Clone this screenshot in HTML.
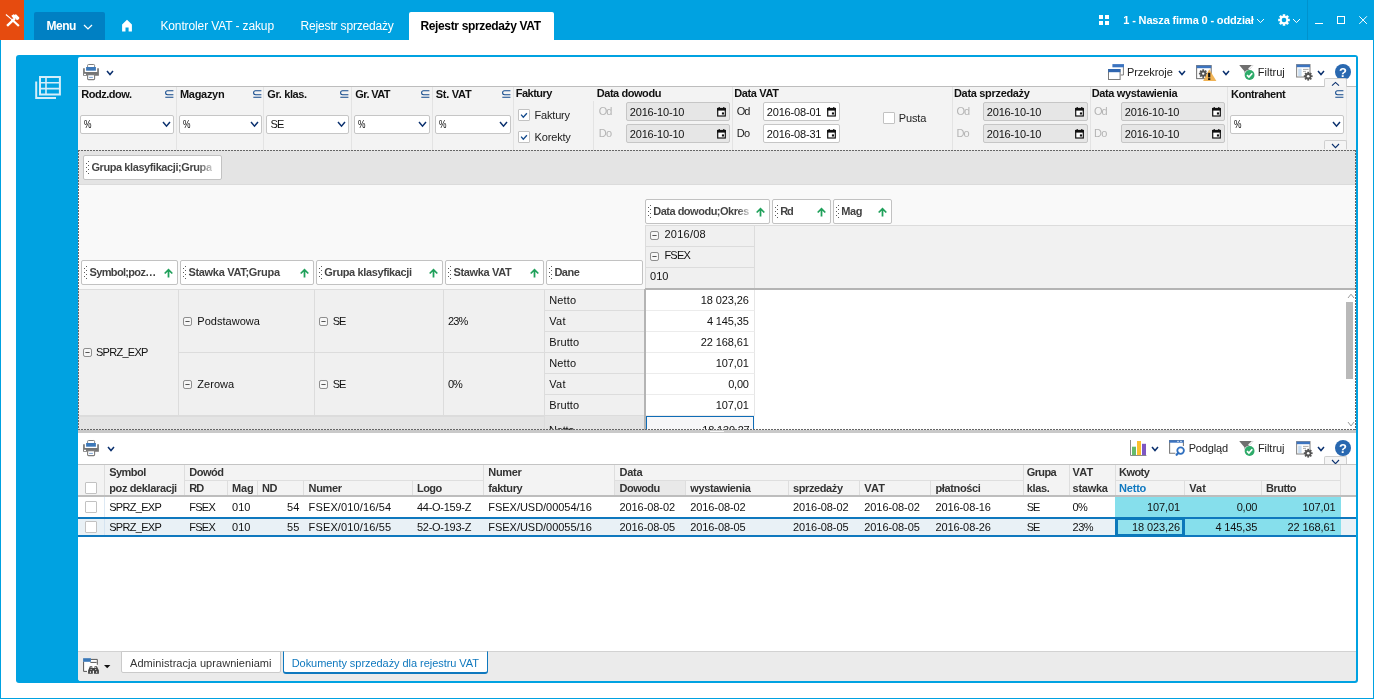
<!DOCTYPE html>
<html lang="pl"><head><meta charset="utf-8"><title>Rejestr sprzedaży VAT</title><style>
html,body{margin:0;padding:0;}
body{width:1374px;height:699px;position:relative;overflow:hidden;background:#fff;font-family:"Liberation Sans", sans-serif;}
#root{position:absolute;left:0;top:0;width:1374px;height:699px;will-change:transform;}
.a{position:absolute;box-sizing:border-box;}
.t{white-space:nowrap;}
svg{display:block;overflow:visible;}
</style></head><body>
<div id="root">
<div class="a" style="left:0px;top:0px;width:1374px;height:40px;background:#00a2e1;"></div>
<div class="a" style="left:0px;top:40px;width:1px;height:659px;background:#00a2e1;"></div>
<div class="a" style="left:1373px;top:40px;width:1px;height:659px;background:#00a2e1;"></div>
<div class="a" style="left:0px;top:698px;width:1374px;height:1px;background:#00a2e1;"></div>
<div class="a" style="left:0px;top:0px;width:24px;height:40px;background:#e64b0f;"></div>
<svg class="a" style="left:5px;top:13px;" width="15" height="15" viewBox="0 0 15 15"><g stroke="#fff" fill="none"><path d="M0.9 1.5 L7 6.6" stroke-width="1.1"/><path d="M6.6 6.3 L13.9 13" stroke-width="2.2"/><path d="M2.1 12.8 L9.8 5.6" stroke-width="2.4"/></g><path d="M6.3 2.7 L8.6 1.3 L10 2 L10.8 1.1 L14.3 4.6 L14.1 6 L12 7.3 L10.4 5.5 L9.4 6.2 L7.4 4.2 Z" fill="#fff"/></svg>
<div class="a" style="left:34px;top:12px;width:71px;height:28px;background:#0080c3;border-radius:2px 2px 0 0;"></div>
<span id="t0" class="a t" style="top:20px;font-size:12px;line-height:12px;color:#fff;font-weight:700;left:46.4px;letter-spacing:-0.436px;">Menu</span>
<svg class="a" style="left:83.3px;top:23.6px;" width="10" height="5.9" viewBox="0 0 10 5.9"><path d="M1 1 L5.0 4.9 L9 1" fill="none" stroke="#fff" stroke-width="1.3" stroke-linecap="butt" stroke-linejoin="miter"/></svg>
<svg class="a" style="left:121px;top:19px;" width="12" height="13" viewBox="0 0 12 13"><path d="M6 0.7 L10.9 5.6 V12.6 H7.6 V8.6 H4.5 V12.6 H1.1 V5.6 Z" fill="#fff"/></svg>
<span id="t1" class="a t" style="top:20px;font-size:12px;line-height:12px;color:#fff;left:160.4px;letter-spacing:-0.117px;">Kontroler VAT - zakup</span>
<span id="t2" class="a t" style="top:20px;font-size:12px;line-height:12px;color:#fff;left:300.6px;letter-spacing:-0.173px;">Rejestr sprzedaży</span>
<div class="a" style="left:409px;top:12px;width:145px;height:28px;background:#fff;border-radius:2px 2px 0 0;"></div>
<span id="t3" class="a t" style="top:20px;font-size:12px;line-height:12px;color:#000;font-weight:700;left:420.4px;letter-spacing:-0.343px;">Rejestr sprzedaży VAT</span>
<div class="a" style="left:1099px;top:15px;width:4px;height:4px;background:#fff;"></div>
<div class="a" style="left:1105px;top:15px;width:4px;height:4px;background:#fff;"></div>
<div class="a" style="left:1099px;top:21px;width:4px;height:4px;background:#fff;"></div>
<div class="a" style="left:1105px;top:21px;width:4px;height:4px;background:#fff;"></div>
<span id="t4" class="a t" style="top:15px;font-size:11px;line-height:11px;color:#fff;font-weight:700;left:1123.3px;letter-spacing:-0.151px;">1 - Nasza firma 0 - oddział</span>
<svg class="a" style="left:1256.4px;top:17.8px;" width="9" height="5.6" viewBox="0 0 9 5.6"><path d="M1 1 L4.5 4.6 L8 1" fill="none" stroke="#fff" stroke-width="1" stroke-linecap="butt" stroke-linejoin="miter"/></svg>
<svg class="a" style="left:1278px;top:14px;" width="12" height="12" viewBox="0 0 12 12"><g fill="#fff"><circle cx="6" cy="6" r="4.2"/><rect x="4.7" y="0.2" width="2.6" height="11.6" rx="0.3" transform="rotate(0 6 6)"/><rect x="4.7" y="0.2" width="2.6" height="11.6" rx="0.3" transform="rotate(45 6 6)"/><rect x="4.7" y="0.2" width="2.6" height="11.6" rx="0.3" transform="rotate(90 6 6)"/><rect x="4.7" y="0.2" width="2.6" height="11.6" rx="0.3" transform="rotate(135 6 6)"/></g><circle cx="6" cy="6" r="2.3" fill="#00a2e1"/></svg>
<svg class="a" style="left:1291.7px;top:17.8px;" width="9" height="5.6" viewBox="0 0 9 5.6"><path d="M1 1 L4.5 4.6 L8 1" fill="none" stroke="#fff" stroke-width="1" stroke-linecap="butt" stroke-linejoin="miter"/></svg>
<div class="a" style="left:1307px;top:0px;width:1px;height:40px;background:#0092cd;"></div>
<div class="a" style="left:1315px;top:23px;width:8px;height:1px;background:#fff;"></div>
<div class="a" style="left:1337px;top:16px;width:8px;height:8px;border:1px solid #fff;"></div>
<svg class="a" style="left:1359px;top:16px;" width="8" height="8" viewBox="0 0 8 8"><path d="M0.3 0.3 L7.9 7.9 M7.9 0.3 L0.3 7.9" stroke="#fff" stroke-width="1" fill="none"/></svg>
<div class="a" style="left:16px;top:55px;width:1342px;height:628px;background:#00a2e1;border-radius:3px 3px 3px 3px;"></div>
<div class="a" style="left:78px;top:57px;width:1278px;height:624px;background:#fff;border-radius:2px 0 2px 3px;"></div>
<svg class="a" style="left:35px;top:76px;" width="27" height="24" viewBox="0 0 27 24"><path d="M1.2 5.4 V22 H21" fill="none" stroke="#d4eefa" stroke-width="2"/><rect x="5" y="1" width="19.9" height="17.5" fill="none" stroke="#d4eefa" stroke-width="2"/><path d="M5 6.8 H24.9 M5 12.6 H24.9 M11 1 V18.5" fill="none" stroke="#d4eefa" stroke-width="1.6"/></svg>
<svg class="a" style="left:83px;top:64px;" width="16" height="16" viewBox="0 0 16 16"><rect x="4.6" y="0.5" width="7" height="4" rx="0.9" fill="#fff" stroke="#7d7d7d" stroke-width="1"/><rect x="2.6" y="2.9" width="10.8" height="4.6" fill="#fff"/><rect x="3.1" y="3" width="9.8" height="3.7" fill="#3d78b8"/><path d="M0.1 4.2 H1.8 V8 H14.2 V4.2 H15.9 V11.8 H0.1 Z" fill="#767676"/><rect x="1" y="9.7" width="2" height="1.3" rx="0.3" fill="#fff"/><rect x="4.6" y="10.6" width="7" height="5" rx="0.9" fill="#fff" stroke="#7d7d7d" stroke-width="1.1"/><rect x="6.1" y="12.9" width="3.8" height="0.9" fill="#6f9bd1"/></svg>
<svg class="a" style="left:106.4px;top:69.5px;" width="8" height="5.6" viewBox="0 0 8 5.6"><path d="M1 1 L4.0 4.6 L7 1" fill="none" stroke="#0a306e" stroke-width="1.5" stroke-linecap="butt" stroke-linejoin="miter"/></svg>
<svg class="a" style="left:1108px;top:64px;" width="17" height="17" viewBox="0 0 17 17"><path d="M15.4 3 V11 H12.6" fill="none" stroke="#7a7a7a" stroke-width="1"/><rect x="4.4" y="0.1" width="11.6" height="3.2" fill="#3c74c0"/><rect x="0.5" y="5.5" width="11.6" height="10" fill="#fff" stroke="#7a7a7a" stroke-width="1"/><rect x="0.2" y="5" width="12.2" height="3.2" fill="#2f66b0"/></svg>
<span id="t5" class="a t" style="top:67px;font-size:11px;line-height:11px;color:#222;left:1127px;letter-spacing:-0.085px;">Przekroje</span>
<svg class="a" style="left:1177.5px;top:69.5px;" width="8" height="5.6" viewBox="0 0 8 5.6"><path d="M1 1 L4.0 4.6 L7 1" fill="none" stroke="#0a306e" stroke-width="1.5" stroke-linecap="butt" stroke-linejoin="miter"/></svg>
<svg class="a" style="left:1195.7px;top:64.6px;" width="21" height="17" viewBox="0 0 21 17"><rect x="0.6" y="0.6" width="14.6" height="13" fill="#fff" stroke="#7a7a7a" stroke-width="1.1"/><rect x="0.6" y="0.6" width="14.6" height="2.6" fill="#3c74c0"/><g fill="#555"><circle cx="7.2" cy="8.6" r="3"/><rect x="6.3" y="4.3" width="1.8" height="8.6" transform="rotate(0 7.2 8.6)"/><rect x="6.3" y="4.3" width="1.8" height="8.6" transform="rotate(45 7.2 8.6)"/><rect x="6.3" y="4.3" width="1.8" height="8.6" transform="rotate(90 7.2 8.6)"/><rect x="6.3" y="4.3" width="1.8" height="8.6" transform="rotate(135 7.2 8.6)"/></g><circle cx="7.2" cy="8.6" r="1.2" fill="#fff"/><path d="M13.2 4.2 L20.4 16 H7.2 Z" fill="#f0b355"/><rect x="12.1" y="7.8" width="2.2" height="4.6" fill="#111"/><rect x="12.1" y="13.2" width="2.2" height="1.8" fill="#111"/></svg>
<svg class="a" style="left:1221.5px;top:69.5px;" width="8" height="5.6" viewBox="0 0 8 5.6"><path d="M1 1 L4.0 4.6 L7 1" fill="none" stroke="#0a306e" stroke-width="1.5" stroke-linecap="butt" stroke-linejoin="miter"/></svg>
<svg class="a" style="left:1239px;top:64px;" width="17" height="17" viewBox="0 0 17 17"><path d="M0.2 1 H14.4 L8.6 7.4 L5.6 12.6 L5.4 7.2 Z" fill="#6f6f6f"/><path d="M9.6 5 L13.6 1.2" stroke="#fff" stroke-width="1.2"/><circle cx="10.6" cy="11" r="5.5" fill="#fff"/><circle cx="10.6" cy="11" r="4.9" fill="#2eab6a"/><path d="M8 11.1 L9.9 13 L13.3 9.2" fill="none" stroke="#fff" stroke-width="1.7"/></svg>
<span id="t6" class="a t" style="top:67px;font-size:11px;line-height:11px;color:#222;left:1257.8px;letter-spacing:0.001px;">Filtruj</span>
<svg class="a" style="left:1295.5px;top:64px;" width="17" height="17" viewBox="0 0 17 17"><rect x="0.6" y="0.6" width="13.4" height="12.4" fill="#fff" stroke="#8a8a8a" stroke-width="1.1"/><rect x="0.6" y="0.6" width="13.4" height="2.6" fill="#3c74c0"/><rect x="2.2" y="4.6" width="3.4" height="7.4" fill="#c8dcf0"/><path d="M7 5.4 H12.6 M7 7.4 H10" stroke="#aaa" stroke-width="1"/><g fill="#555"><circle cx="12.2" cy="12.2" r="3.1"/><rect x="11.3" y="7.8" width="1.8" height="8.8" transform="rotate(0 12.2 12.2)"/><rect x="11.3" y="7.8" width="1.8" height="8.8" transform="rotate(45 12.2 12.2)"/><rect x="11.3" y="7.8" width="1.8" height="8.8" transform="rotate(90 12.2 12.2)"/><rect x="11.3" y="7.8" width="1.8" height="8.8" transform="rotate(135 12.2 12.2)"/></g><circle cx="12.2" cy="12.2" r="1.3" fill="#fff"/></svg>
<svg class="a" style="left:1316.5px;top:69.5px;" width="8" height="5.6" viewBox="0 0 8 5.6"><path d="M1 1 L4.0 4.6 L7 1" fill="none" stroke="#0a306e" stroke-width="1.5" stroke-linecap="butt" stroke-linejoin="miter"/></svg>
<svg class="a" style="left:1335px;top:64px;" width="16" height="16" viewBox="0 0 16 16"><circle cx="8" cy="8" r="8" fill="#2968b0"/><text x="8" y="12.6" font-family="Liberation Sans, sans-serif" font-size="13" font-weight="700" fill="#fff" text-anchor="middle">?</text></svg>
<div class="a" style="left:78px;top:86px;width:1278px;height:65px;background:#f3f3f3;border-top:1px solid #bdbdbd;"></div>
<div class="a" style="left:1346px;top:87px;width:1px;height:63px;background:#e6e6e6;"></div>
<div class="a" style="left:176px;top:87px;width:1px;height:63px;background:#e3e3e3;"></div>
<div class="a" style="left:263px;top:87px;width:1px;height:63px;background:#e3e3e3;"></div>
<div class="a" style="left:351px;top:87px;width:1px;height:63px;background:#e3e3e3;"></div>
<div class="a" style="left:432px;top:87px;width:1px;height:63px;background:#e3e3e3;"></div>
<div class="a" style="left:513px;top:87px;width:1px;height:63px;background:#e3e3e3;"></div>
<div class="a" style="left:732px;top:87px;width:1px;height:63px;background:#e3e3e3;"></div>
<div class="a" style="left:952px;top:87px;width:1px;height:63px;background:#e3e3e3;"></div>
<div class="a" style="left:1090px;top:87px;width:1px;height:63px;background:#e3e3e3;"></div>
<div class="a" style="left:1227px;top:87px;width:1px;height:63px;background:#e3e3e3;"></div>
<div class="a" style="left:593px;top:101px;width:1px;height:49px;background:#e3e3e3;"></div>
<span id="t7" class="a t" style="top:89px;font-size:11px;line-height:11px;color:#111;font-weight:700;left:81.2px;letter-spacing:-0.477px;">Rodz.dow.</span>
<span id="t8" class="a t" style="top:89px;font-size:11px;line-height:11px;color:#111;font-weight:700;left:180px;letter-spacing:-0.310px;">Magazyn</span>
<span id="t9" class="a t" style="top:89px;font-size:11px;line-height:11px;color:#111;font-weight:700;left:267.3px;letter-spacing:-0.368px;">Gr. klas.</span>
<span id="t10" class="a t" style="top:89px;font-size:11px;line-height:11px;color:#111;font-weight:700;left:355.3px;letter-spacing:-0.574px;">Gr. VAT</span>
<span id="t11" class="a t" style="top:89px;font-size:11px;line-height:11px;color:#111;font-weight:700;left:435.8px;letter-spacing:-0.269px;">St. VAT</span>
<span id="t12" class="a t" style="top:88px;font-size:11px;line-height:11px;color:#111;font-weight:700;left:515.7px;letter-spacing:-0.493px;">Faktury</span>
<span id="t13" class="a t" style="top:88px;font-size:11px;line-height:11px;color:#111;font-weight:700;left:596.7px;letter-spacing:-0.433px;">Data dowodu</span>
<span id="t14" class="a t" style="top:88px;font-size:11px;line-height:11px;color:#111;font-weight:700;left:734.3px;letter-spacing:-0.383px;">Data VAT</span>
<span id="t15" class="a t" style="top:88px;font-size:11px;line-height:11px;color:#111;font-weight:700;left:954px;letter-spacing:-0.321px;">Data sprzedaży</span>
<span id="t16" class="a t" style="top:88px;font-size:11px;line-height:11px;color:#111;font-weight:700;left:1091.7px;letter-spacing:-0.350px;">Data wystawienia</span>
<span id="t17" class="a t" style="top:89px;font-size:11px;line-height:11px;color:#111;font-weight:700;left:1231px;letter-spacing:-0.437px;">Kontrahent</span>
<svg class="a" style="left:164.6px;top:89.6px;" width="9" height="8" viewBox="0 0 9 8"><path d="M8.4 0.7 H2.6 A2 2 0 0 0 2.6 4.7 H8.4 M0.3 7.2 H8.4" fill="none" stroke="#134a8c" stroke-width="1.05"/></svg>
<svg class="a" style="left:252.6px;top:89.6px;" width="9" height="8" viewBox="0 0 9 8"><path d="M8.4 0.7 H2.6 A2 2 0 0 0 2.6 4.7 H8.4 M0.3 7.2 H8.4" fill="none" stroke="#134a8c" stroke-width="1.05"/></svg>
<svg class="a" style="left:340px;top:89.6px;" width="9" height="8" viewBox="0 0 9 8"><path d="M8.4 0.7 H2.6 A2 2 0 0 0 2.6 4.7 H8.4 M0.3 7.2 H8.4" fill="none" stroke="#134a8c" stroke-width="1.05"/></svg>
<svg class="a" style="left:420.8px;top:89.6px;" width="9" height="8" viewBox="0 0 9 8"><path d="M8.4 0.7 H2.6 A2 2 0 0 0 2.6 4.7 H8.4 M0.3 7.2 H8.4" fill="none" stroke="#134a8c" stroke-width="1.05"/></svg>
<svg class="a" style="left:501.8px;top:89.6px;" width="9" height="8" viewBox="0 0 9 8"><path d="M8.4 0.7 H2.6 A2 2 0 0 0 2.6 4.7 H8.4 M0.3 7.2 H8.4" fill="none" stroke="#134a8c" stroke-width="1.05"/></svg>
<svg class="a" style="left:1335px;top:89.6px;" width="9" height="8" viewBox="0 0 9 8"><path d="M8.4 0.7 H2.6 A2 2 0 0 0 2.6 4.7 H8.4 M0.3 7.2 H8.4" fill="none" stroke="#134a8c" stroke-width="1.05"/></svg>
<div class="a" style="left:80px;top:115px;width:94px;height:19px;background:#fff;border:1px solid #c6c6c6;border-radius:2px;"></div>
<span id="t18" class="a t" style="top:120px;font-size:10px;line-height:10px;color:#000;left:83.8px;transform:scaleX(0.84);transform-origin:0 50%;">%</span>
<svg class="a" style="left:161.7px;top:121.3px;" width="9" height="6.2" viewBox="0 0 9 6.2"><path d="M1 1 L4.5 5.2 L8 1" fill="none" stroke="#0a306e" stroke-width="1.5" stroke-linecap="butt" stroke-linejoin="miter"/></svg>
<div class="a" style="left:179px;top:115px;width:83px;height:19px;background:#fff;border:1px solid #c6c6c6;border-radius:2px;"></div>
<span id="t19" class="a t" style="top:120px;font-size:10px;line-height:10px;color:#000;left:182.8px;transform:scaleX(0.84);transform-origin:0 50%;">%</span>
<svg class="a" style="left:249.7px;top:121.3px;" width="9" height="6.2" viewBox="0 0 9 6.2"><path d="M1 1 L4.5 5.2 L8 1" fill="none" stroke="#0a306e" stroke-width="1.5" stroke-linecap="butt" stroke-linejoin="miter"/></svg>
<div class="a" style="left:266px;top:115px;width:83px;height:19px;background:#fff;border:1px solid #c6c6c6;border-radius:2px;"></div>
<span id="t20" class="a t" style="top:119px;font-size:11px;line-height:11px;color:#111;left:270.4px;letter-spacing:-0.644px;">SE</span>
<svg class="a" style="left:336.7px;top:121.3px;" width="9" height="6.2" viewBox="0 0 9 6.2"><path d="M1 1 L4.5 5.2 L8 1" fill="none" stroke="#0a306e" stroke-width="1.5" stroke-linecap="butt" stroke-linejoin="miter"/></svg>
<div class="a" style="left:354px;top:115px;width:76px;height:19px;background:#fff;border:1px solid #c6c6c6;border-radius:2px;"></div>
<span id="t21" class="a t" style="top:120px;font-size:10px;line-height:10px;color:#000;left:357.8px;transform:scaleX(0.84);transform-origin:0 50%;">%</span>
<svg class="a" style="left:417.7px;top:121.3px;" width="9" height="6.2" viewBox="0 0 9 6.2"><path d="M1 1 L4.5 5.2 L8 1" fill="none" stroke="#0a306e" stroke-width="1.5" stroke-linecap="butt" stroke-linejoin="miter"/></svg>
<div class="a" style="left:435px;top:115px;width:76px;height:19px;background:#fff;border:1px solid #c6c6c6;border-radius:2px;"></div>
<span id="t22" class="a t" style="top:120px;font-size:10px;line-height:10px;color:#000;left:438.8px;transform:scaleX(0.84);transform-origin:0 50%;">%</span>
<svg class="a" style="left:498.7px;top:121.3px;" width="9" height="6.2" viewBox="0 0 9 6.2"><path d="M1 1 L4.5 5.2 L8 1" fill="none" stroke="#0a306e" stroke-width="1.5" stroke-linecap="butt" stroke-linejoin="miter"/></svg>
<div class="a" style="left:1230px;top:115px;width:114px;height:19px;background:#fff;border:1px solid #c6c6c6;border-radius:2px;"></div>
<span id="t23" class="a t" style="top:120px;font-size:10px;line-height:10px;color:#000;left:1233.8px;transform:scaleX(0.84);transform-origin:0 50%;">%</span>
<svg class="a" style="left:1331.7px;top:121.3px;" width="9" height="6.2" viewBox="0 0 9 6.2"><path d="M1 1 L4.5 5.2 L8 1" fill="none" stroke="#0a306e" stroke-width="1.5" stroke-linecap="butt" stroke-linejoin="miter"/></svg>
<div class="a" style="left:518px;top:109px;width:12px;height:12px;background:#fff;border:1px solid #c2c2c2;border-radius:1px;"></div>
<svg class="a" style="left:520px;top:112px;" width="8" height="7" viewBox="0 0 8 7"><path d="M1.1 2.6 L3.3 5.2 L6.9 1.2" fill="none" stroke="#134a8c" stroke-width="1.3"/></svg>
<span id="t24" class="a t" style="top:110px;font-size:11px;line-height:11px;color:#222;left:534.6px;letter-spacing:-0.198px;">Faktury</span>
<div class="a" style="left:518px;top:131px;width:12px;height:12px;background:#fff;border:1px solid #c2c2c2;border-radius:1px;"></div>
<svg class="a" style="left:520px;top:134px;" width="8" height="7" viewBox="0 0 8 7"><path d="M1.1 2.6 L3.3 5.2 L6.9 1.2" fill="none" stroke="#134a8c" stroke-width="1.3"/></svg>
<span id="t25" class="a t" style="top:132px;font-size:11px;line-height:11px;color:#222;left:534.6px;letter-spacing:-0.171px;">Korekty</span>
<span id="t26" class="a t" style="top:106px;font-size:11px;line-height:11px;color:#b4b4b4;left:598.8px;letter-spacing:-1.044px;">Od</span>
<span id="t27" class="a t" style="top:128px;font-size:11px;line-height:11px;color:#b4b4b4;left:598.8px;letter-spacing:-0.731px;">Do</span>
<div class="a" style="left:626px;top:102px;width:104px;height:19px;background:#e6e6e6;border:1px solid #c6c6c6;border-radius:2px;"></div>
<span id="t28" class="a t" style="top:107px;font-size:11px;line-height:11px;color:#111;left:629.8px;letter-spacing:-0.178px;">2016-10-10</span>
<svg class="a" style="left:717px;top:106.8px;" width="9" height="10" viewBox="0 0 9 10"><rect x="0.7" y="1.6" width="7.6" height="7.4" fill="#fff" stroke="#111" stroke-width="1.2"/><rect x="0.1" y="0.9" width="8.8" height="2.7" fill="#111"/><rect x="1.6" y="0" width="1.2" height="1.6" fill="#111"/><rect x="6.2" y="0" width="1.2" height="1.6" fill="#111"/><rect x="4.9" y="5.4" width="2.1" height="2.1" fill="#111"/></svg>
<div class="a" style="left:626px;top:124px;width:104px;height:19px;background:#e6e6e6;border:1px solid #c6c6c6;border-radius:2px;"></div>
<span id="t29" class="a t" style="top:129px;font-size:11px;line-height:11px;color:#111;left:629.8px;letter-spacing:-0.178px;">2016-10-10</span>
<svg class="a" style="left:717px;top:128.8px;" width="9" height="10" viewBox="0 0 9 10"><rect x="0.7" y="1.6" width="7.6" height="7.4" fill="#fff" stroke="#111" stroke-width="1.2"/><rect x="0.1" y="0.9" width="8.8" height="2.7" fill="#111"/><rect x="1.6" y="0" width="1.2" height="1.6" fill="#111"/><rect x="6.2" y="0" width="1.2" height="1.6" fill="#111"/><rect x="4.9" y="5.4" width="2.1" height="2.1" fill="#111"/></svg>
<span id="t30" class="a t" style="top:106px;font-size:11px;line-height:11px;color:#222;left:736.7px;letter-spacing:-1.044px;">Od</span>
<span id="t31" class="a t" style="top:128px;font-size:11px;line-height:11px;color:#222;left:736.7px;letter-spacing:-0.731px;">Do</span>
<div class="a" style="left:763px;top:102px;width:77px;height:19px;background:#fff;border:1px solid #c6c6c6;border-radius:2px;"></div>
<span id="t32" class="a t" style="top:107px;font-size:11px;line-height:11px;color:#111;left:766.8px;letter-spacing:-0.178px;">2016-08-01</span>
<svg class="a" style="left:827px;top:106.8px;" width="9" height="10" viewBox="0 0 9 10"><rect x="0.7" y="1.6" width="7.6" height="7.4" fill="#fff" stroke="#111" stroke-width="1.2"/><rect x="0.1" y="0.9" width="8.8" height="2.7" fill="#111"/><rect x="1.6" y="0" width="1.2" height="1.6" fill="#111"/><rect x="6.2" y="0" width="1.2" height="1.6" fill="#111"/><rect x="4.9" y="5.4" width="2.1" height="2.1" fill="#111"/></svg>
<div class="a" style="left:763px;top:124px;width:77px;height:19px;background:#fff;border:1px solid #c6c6c6;border-radius:2px;"></div>
<span id="t33" class="a t" style="top:129px;font-size:11px;line-height:11px;color:#111;left:766.8px;letter-spacing:-0.178px;">2016-08-31</span>
<svg class="a" style="left:827px;top:128.8px;" width="9" height="10" viewBox="0 0 9 10"><rect x="0.7" y="1.6" width="7.6" height="7.4" fill="#fff" stroke="#111" stroke-width="1.2"/><rect x="0.1" y="0.9" width="8.8" height="2.7" fill="#111"/><rect x="1.6" y="0" width="1.2" height="1.6" fill="#111"/><rect x="6.2" y="0" width="1.2" height="1.6" fill="#111"/><rect x="4.9" y="5.4" width="2.1" height="2.1" fill="#111"/></svg>
<div class="a" style="left:883px;top:112px;width:12px;height:12px;background:#fff;border:1px solid #c2c2c2;border-radius:1px;"></div>
<span id="t34" class="a t" style="top:113px;font-size:11px;line-height:11px;color:#222;left:898.7px;letter-spacing:-0.128px;">Pusta</span>
<span id="t35" class="a t" style="top:106px;font-size:11px;line-height:11px;color:#b4b4b4;left:956.4px;letter-spacing:-1.044px;">Od</span>
<span id="t36" class="a t" style="top:128px;font-size:11px;line-height:11px;color:#b4b4b4;left:956.4px;letter-spacing:-0.731px;">Do</span>
<div class="a" style="left:983px;top:102px;width:105px;height:19px;background:#e6e6e6;border:1px solid #c6c6c6;border-radius:2px;"></div>
<span id="t37" class="a t" style="top:107px;font-size:11px;line-height:11px;color:#111;left:986.8px;letter-spacing:-0.178px;">2016-10-10</span>
<svg class="a" style="left:1075px;top:106.8px;" width="9" height="10" viewBox="0 0 9 10"><rect x="0.7" y="1.6" width="7.6" height="7.4" fill="#fff" stroke="#111" stroke-width="1.2"/><rect x="0.1" y="0.9" width="8.8" height="2.7" fill="#111"/><rect x="1.6" y="0" width="1.2" height="1.6" fill="#111"/><rect x="6.2" y="0" width="1.2" height="1.6" fill="#111"/><rect x="4.9" y="5.4" width="2.1" height="2.1" fill="#111"/></svg>
<div class="a" style="left:983px;top:124px;width:105px;height:19px;background:#e6e6e6;border:1px solid #c6c6c6;border-radius:2px;"></div>
<span id="t38" class="a t" style="top:129px;font-size:11px;line-height:11px;color:#111;left:986.8px;letter-spacing:-0.178px;">2016-10-10</span>
<svg class="a" style="left:1075px;top:128.8px;" width="9" height="10" viewBox="0 0 9 10"><rect x="0.7" y="1.6" width="7.6" height="7.4" fill="#fff" stroke="#111" stroke-width="1.2"/><rect x="0.1" y="0.9" width="8.8" height="2.7" fill="#111"/><rect x="1.6" y="0" width="1.2" height="1.6" fill="#111"/><rect x="6.2" y="0" width="1.2" height="1.6" fill="#111"/><rect x="4.9" y="5.4" width="2.1" height="2.1" fill="#111"/></svg>
<span id="t39" class="a t" style="top:106px;font-size:11px;line-height:11px;color:#b4b4b4;left:1094px;letter-spacing:-1.044px;">Od</span>
<span id="t40" class="a t" style="top:128px;font-size:11px;line-height:11px;color:#b4b4b4;left:1094px;letter-spacing:-0.731px;">Do</span>
<div class="a" style="left:1121px;top:102px;width:104px;height:19px;background:#e6e6e6;border:1px solid #c6c6c6;border-radius:2px;"></div>
<span id="t41" class="a t" style="top:107px;font-size:11px;line-height:11px;color:#111;left:1124.8px;letter-spacing:-0.178px;">2016-10-10</span>
<svg class="a" style="left:1212px;top:106.8px;" width="9" height="10" viewBox="0 0 9 10"><rect x="0.7" y="1.6" width="7.6" height="7.4" fill="#fff" stroke="#111" stroke-width="1.2"/><rect x="0.1" y="0.9" width="8.8" height="2.7" fill="#111"/><rect x="1.6" y="0" width="1.2" height="1.6" fill="#111"/><rect x="6.2" y="0" width="1.2" height="1.6" fill="#111"/><rect x="4.9" y="5.4" width="2.1" height="2.1" fill="#111"/></svg>
<div class="a" style="left:1121px;top:124px;width:104px;height:19px;background:#e6e6e6;border:1px solid #c6c6c6;border-radius:2px;"></div>
<span id="t42" class="a t" style="top:129px;font-size:11px;line-height:11px;color:#111;left:1124.8px;letter-spacing:-0.178px;">2016-10-10</span>
<svg class="a" style="left:1212px;top:128.8px;" width="9" height="10" viewBox="0 0 9 10"><rect x="0.7" y="1.6" width="7.6" height="7.4" fill="#fff" stroke="#111" stroke-width="1.2"/><rect x="0.1" y="0.9" width="8.8" height="2.7" fill="#111"/><rect x="1.6" y="0" width="1.2" height="1.6" fill="#111"/><rect x="6.2" y="0" width="1.2" height="1.6" fill="#111"/><rect x="4.9" y="5.4" width="2.1" height="2.1" fill="#111"/></svg>
<div class="a" style="left:1324px;top:78px;width:23px;height:9px;background:#f5f5f5;border:1px solid #cfcfcf;border-radius:2px 2px 0 0;border-bottom:none;"></div>
<svg class="a" style="left:1331.4px;top:81.3px;" width="9" height="6" viewBox="0 0 9 6"><path d="M1 4.6 L4.5 1.4 L8 4.6" fill="none" stroke="#0a306e" stroke-width="1.1"/></svg>
<div class="a" style="left:1324px;top:140px;width:23px;height:9px;background:#f5f5f5;border:1px solid #cfcfcf;border-radius:2px 2px 0 0;border-bottom:none;"></div>
<svg class="a" style="left:1331px;top:143px;" width="9" height="5.6" viewBox="0 0 9 5.6"><path d="M1 1 L4.5 4.6 L8 1" fill="none" stroke="#0a306e" stroke-width="1.1" stroke-linecap="butt" stroke-linejoin="miter"/></svg>
<div class="a" style="left:78px;top:150px;width:1278px;height:280px;background:#f9f9f9;"></div>
<div class="a" style="left:78px;top:150px;width:1278px;height:35px;background:#e4e4e4;border-bottom:1px solid #dbdbdb;"></div>
<div class="a" style="left:646px;top:225px;width:710px;height:64px;background:#f1f1f1;border-top:1px solid #dcdcdc;"></div>
<div class="a" style="left:83px;top:155px;width:139px;height:25px;background:#fff;border:1px solid #c2c2c2;border-radius:2px;"></div>
<svg class="a" style="left:86px;top:161px;" width="3" height="14" viewBox="0 0 3 14"><rect x="2" y="0" width="1" height="1" fill="#5a5a5a"/><rect x="0" y="2" width="1" height="1" fill="#5a5a5a"/><rect x="2" y="4" width="1" height="1" fill="#5a5a5a"/><rect x="0" y="6" width="1" height="1" fill="#5a5a5a"/><rect x="2" y="8" width="1" height="1" fill="#5a5a5a"/><rect x="0" y="10" width="1" height="1" fill="#5a5a5a"/><rect x="2" y="12" width="1" height="1" fill="#5a5a5a"/></svg>
<span id="t43" class="a t" style="top:162px;font-size:11px;line-height:11px;color:#424242;font-weight:700;left:91.4px;letter-spacing:-0.417px;background:linear-gradient(90deg,#424242 88%,#ccc 100%);-webkit-background-clip:text;background-clip:text;color:transparent;">Grupa klasyfikacji;Grupa</span>
<div class="a" style="left:645px;top:199px;width:125px;height:25px;background:#fff;border:1px solid #c2c2c2;border-radius:2px;"></div>
<svg class="a" style="left:648px;top:205px;" width="3" height="14" viewBox="0 0 3 14"><rect x="2" y="0" width="1" height="1" fill="#5a5a5a"/><rect x="0" y="2" width="1" height="1" fill="#5a5a5a"/><rect x="2" y="4" width="1" height="1" fill="#5a5a5a"/><rect x="0" y="6" width="1" height="1" fill="#5a5a5a"/><rect x="2" y="8" width="1" height="1" fill="#5a5a5a"/><rect x="0" y="10" width="1" height="1" fill="#5a5a5a"/><rect x="2" y="12" width="1" height="1" fill="#5a5a5a"/></svg>
<span id="t44" class="a t" style="top:206px;font-size:11px;line-height:11px;color:#424242;font-weight:700;left:653.2px;letter-spacing:-0.489px;background:linear-gradient(90deg,#424242 88%,#ccc 100%);-webkit-background-clip:text;background-clip:text;color:transparent;">Data dowodu;Okres</span>
<svg class="a" style="left:755.6px;top:207.2px;" width="9" height="10" viewBox="0 0 9 10"><path d="M4.5 9.6 V2 M0.7 5.5 L4.5 1.7 L8.3 5.5" fill="none" stroke="#1fa05a" stroke-width="1.75" stroke-linejoin="miter"/></svg>
<div class="a" style="left:772px;top:199px;width:59px;height:25px;background:#fff;border:1px solid #c2c2c2;border-radius:2px;"></div>
<svg class="a" style="left:775px;top:205px;" width="3" height="14" viewBox="0 0 3 14"><rect x="2" y="0" width="1" height="1" fill="#5a5a5a"/><rect x="0" y="2" width="1" height="1" fill="#5a5a5a"/><rect x="2" y="4" width="1" height="1" fill="#5a5a5a"/><rect x="0" y="6" width="1" height="1" fill="#5a5a5a"/><rect x="2" y="8" width="1" height="1" fill="#5a5a5a"/><rect x="0" y="10" width="1" height="1" fill="#5a5a5a"/><rect x="2" y="12" width="1" height="1" fill="#5a5a5a"/></svg>
<span id="t45" class="a t" style="top:206px;font-size:11px;line-height:11px;color:#424242;font-weight:700;left:780.2px;letter-spacing:-1.036px;">Rd</span>
<svg class="a" style="left:816.6px;top:207.2px;" width="9" height="10" viewBox="0 0 9 10"><path d="M4.5 9.6 V2 M0.7 5.5 L4.5 1.7 L8.3 5.5" fill="none" stroke="#1fa05a" stroke-width="1.75" stroke-linejoin="miter"/></svg>
<div class="a" style="left:833px;top:199px;width:59px;height:25px;background:#fff;border:1px solid #c2c2c2;border-radius:2px;"></div>
<svg class="a" style="left:836px;top:205px;" width="3" height="14" viewBox="0 0 3 14"><rect x="2" y="0" width="1" height="1" fill="#5a5a5a"/><rect x="0" y="2" width="1" height="1" fill="#5a5a5a"/><rect x="2" y="4" width="1" height="1" fill="#5a5a5a"/><rect x="0" y="6" width="1" height="1" fill="#5a5a5a"/><rect x="2" y="8" width="1" height="1" fill="#5a5a5a"/><rect x="0" y="10" width="1" height="1" fill="#5a5a5a"/><rect x="2" y="12" width="1" height="1" fill="#5a5a5a"/></svg>
<span id="t46" class="a t" style="top:206px;font-size:11px;line-height:11px;color:#424242;font-weight:700;left:841.3px;letter-spacing:-0.367px;">Mag</span>
<svg class="a" style="left:877.6px;top:207.2px;" width="9" height="10" viewBox="0 0 9 10"><path d="M4.5 9.6 V2 M0.7 5.5 L4.5 1.7 L8.3 5.5" fill="none" stroke="#1fa05a" stroke-width="1.75" stroke-linejoin="miter"/></svg>
<div class="a" style="left:81px;top:260px;width:97px;height:25px;background:#fff;border:1px solid #c2c2c2;border-radius:2px;"></div>
<svg class="a" style="left:84px;top:266px;" width="3" height="14" viewBox="0 0 3 14"><rect x="2" y="0" width="1" height="1" fill="#5a5a5a"/><rect x="0" y="2" width="1" height="1" fill="#5a5a5a"/><rect x="2" y="4" width="1" height="1" fill="#5a5a5a"/><rect x="0" y="6" width="1" height="1" fill="#5a5a5a"/><rect x="2" y="8" width="1" height="1" fill="#5a5a5a"/><rect x="0" y="10" width="1" height="1" fill="#5a5a5a"/><rect x="2" y="12" width="1" height="1" fill="#5a5a5a"/></svg>
<span id="t47" class="a t" style="top:267px;font-size:11px;line-height:11px;color:#424242;font-weight:700;left:89.6px;letter-spacing:-0.668px;">Symbol;poz…</span>
<svg class="a" style="left:163.6px;top:268.2px;" width="9" height="10" viewBox="0 0 9 10"><path d="M4.5 9.6 V2 M0.7 5.5 L4.5 1.7 L8.3 5.5" fill="none" stroke="#1fa05a" stroke-width="1.75" stroke-linejoin="miter"/></svg>
<div class="a" style="left:180px;top:260px;width:134px;height:25px;background:#fff;border:1px solid #c2c2c2;border-radius:2px;"></div>
<svg class="a" style="left:183px;top:266px;" width="3" height="14" viewBox="0 0 3 14"><rect x="2" y="0" width="1" height="1" fill="#5a5a5a"/><rect x="0" y="2" width="1" height="1" fill="#5a5a5a"/><rect x="2" y="4" width="1" height="1" fill="#5a5a5a"/><rect x="0" y="6" width="1" height="1" fill="#5a5a5a"/><rect x="2" y="8" width="1" height="1" fill="#5a5a5a"/><rect x="0" y="10" width="1" height="1" fill="#5a5a5a"/><rect x="2" y="12" width="1" height="1" fill="#5a5a5a"/></svg>
<span id="t48" class="a t" style="top:267px;font-size:11px;line-height:11px;color:#424242;font-weight:700;left:188.4px;letter-spacing:-0.304px;">Stawka VAT;Grupa</span>
<svg class="a" style="left:299.6px;top:268.2px;" width="9" height="10" viewBox="0 0 9 10"><path d="M4.5 9.6 V2 M0.7 5.5 L4.5 1.7 L8.3 5.5" fill="none" stroke="#1fa05a" stroke-width="1.75" stroke-linejoin="miter"/></svg>
<div class="a" style="left:316px;top:260px;width:127px;height:25px;background:#fff;border:1px solid #c2c2c2;border-radius:2px;"></div>
<svg class="a" style="left:319px;top:266px;" width="3" height="14" viewBox="0 0 3 14"><rect x="2" y="0" width="1" height="1" fill="#5a5a5a"/><rect x="0" y="2" width="1" height="1" fill="#5a5a5a"/><rect x="2" y="4" width="1" height="1" fill="#5a5a5a"/><rect x="0" y="6" width="1" height="1" fill="#5a5a5a"/><rect x="2" y="8" width="1" height="1" fill="#5a5a5a"/><rect x="0" y="10" width="1" height="1" fill="#5a5a5a"/><rect x="2" y="12" width="1" height="1" fill="#5a5a5a"/></svg>
<span id="t49" class="a t" style="top:267px;font-size:11px;line-height:11px;color:#424242;font-weight:700;left:324.3px;letter-spacing:-0.376px;">Grupa klasyfikacji</span>
<svg class="a" style="left:428.6px;top:268.2px;" width="9" height="10" viewBox="0 0 9 10"><path d="M4.5 9.6 V2 M0.7 5.5 L4.5 1.7 L8.3 5.5" fill="none" stroke="#1fa05a" stroke-width="1.75" stroke-linejoin="miter"/></svg>
<div class="a" style="left:445px;top:260px;width:99px;height:25px;background:#fff;border:1px solid #c2c2c2;border-radius:2px;"></div>
<svg class="a" style="left:448px;top:266px;" width="3" height="14" viewBox="0 0 3 14"><rect x="2" y="0" width="1" height="1" fill="#5a5a5a"/><rect x="0" y="2" width="1" height="1" fill="#5a5a5a"/><rect x="2" y="4" width="1" height="1" fill="#5a5a5a"/><rect x="0" y="6" width="1" height="1" fill="#5a5a5a"/><rect x="2" y="8" width="1" height="1" fill="#5a5a5a"/><rect x="0" y="10" width="1" height="1" fill="#5a5a5a"/><rect x="2" y="12" width="1" height="1" fill="#5a5a5a"/></svg>
<span id="t50" class="a t" style="top:267px;font-size:11px;line-height:11px;color:#424242;font-weight:700;left:453.4px;letter-spacing:-0.324px;">Stawka VAT</span>
<svg class="a" style="left:529.6px;top:268.2px;" width="9" height="10" viewBox="0 0 9 10"><path d="M4.5 9.6 V2 M0.7 5.5 L4.5 1.7 L8.3 5.5" fill="none" stroke="#1fa05a" stroke-width="1.75" stroke-linejoin="miter"/></svg>
<div class="a" style="left:546px;top:260px;width:97px;height:25px;background:#fff;border:1px solid #c2c2c2;border-radius:2px;"></div>
<svg class="a" style="left:549px;top:266px;" width="3" height="14" viewBox="0 0 3 14"><rect x="2" y="0" width="1" height="1" fill="#5a5a5a"/><rect x="0" y="2" width="1" height="1" fill="#5a5a5a"/><rect x="2" y="4" width="1" height="1" fill="#5a5a5a"/><rect x="0" y="6" width="1" height="1" fill="#5a5a5a"/><rect x="2" y="8" width="1" height="1" fill="#5a5a5a"/><rect x="0" y="10" width="1" height="1" fill="#5a5a5a"/><rect x="2" y="12" width="1" height="1" fill="#5a5a5a"/></svg>
<span id="t51" class="a t" style="top:267px;font-size:11px;line-height:11px;color:#424242;font-weight:700;left:554.4px;letter-spacing:-0.502px;">Dane</span>
<div class="a" style="left:645px;top:225px;width:110px;height:22px;background:#f0f0f0;border:1px solid #dcdcdc;"></div>
<svg class="a" style="left:650px;top:231px;" width="9" height="9" viewBox="0 0 9 9"><rect x="0.5" y="0.5" width="8" height="8" rx="1.6" fill="#f6f6f6" stroke="#8c8c8c" stroke-width="1"/><path d="M2.4 4.5 H6.6" stroke="#555" stroke-width="1"/></svg>
<span id="t52" class="a t" style="top:229px;font-size:11px;line-height:11px;color:#111;left:664.4px;letter-spacing:0.261px;">2016/08</span>
<div class="a" style="left:645px;top:246px;width:110px;height:22px;background:#f0f0f0;border:1px solid #dcdcdc;"></div>
<svg class="a" style="left:650px;top:252px;" width="9" height="9" viewBox="0 0 9 9"><rect x="0.5" y="0.5" width="8" height="8" rx="1.6" fill="#f6f6f6" stroke="#8c8c8c" stroke-width="1"/><path d="M2.4 4.5 H6.6" stroke="#555" stroke-width="1"/></svg>
<span id="t53" class="a t" style="top:250px;font-size:11px;line-height:11px;color:#111;left:664.4px;letter-spacing:-0.745px;">FSEX</span>
<div class="a" style="left:645px;top:267px;width:110px;height:23px;background:#f0f0f0;border:1px solid #dcdcdc;"></div>
<span id="t54" class="a t" style="top:271px;font-size:11px;line-height:11px;color:#111;left:650px;letter-spacing:0.057px;">010</span>
<div class="a" style="left:78px;top:289px;width:101px;height:127px;background:#f0f0f0;border:1px solid #dcdcdc;"></div>
<div class="a" style="left:178px;top:289px;width:137px;height:64px;background:#f0f0f0;border:1px solid #dcdcdc;"></div>
<div class="a" style="left:178px;top:352px;width:137px;height:64px;background:#f0f0f0;border:1px solid #dcdcdc;"></div>
<div class="a" style="left:314px;top:289px;width:130px;height:64px;background:#f0f0f0;border:1px solid #dcdcdc;"></div>
<div class="a" style="left:314px;top:352px;width:130px;height:64px;background:#f0f0f0;border:1px solid #dcdcdc;"></div>
<div class="a" style="left:443px;top:289px;width:102px;height:64px;background:#f0f0f0;border:1px solid #dcdcdc;"></div>
<div class="a" style="left:443px;top:352px;width:102px;height:64px;background:#f0f0f0;border:1px solid #dcdcdc;"></div>
<svg class="a" style="left:83px;top:348px;" width="9" height="9" viewBox="0 0 9 9"><rect x="0.5" y="0.5" width="8" height="8" rx="1.6" fill="#f6f6f6" stroke="#8c8c8c" stroke-width="1"/><path d="M2.4 4.5 H6.6" stroke="#555" stroke-width="1"/></svg>
<span id="t55" class="a t" style="top:347px;font-size:11px;line-height:11px;color:#111;left:96px;letter-spacing:-0.721px;">SPRZ_EXP</span>
<svg class="a" style="left:183px;top:317px;" width="9" height="9" viewBox="0 0 9 9"><rect x="0.5" y="0.5" width="8" height="8" rx="1.6" fill="#f6f6f6" stroke="#8c8c8c" stroke-width="1"/><path d="M2.4 4.5 H6.6" stroke="#555" stroke-width="1"/></svg>
<span id="t56" class="a t" style="top:316px;font-size:11px;line-height:11px;color:#111;left:197.3px;letter-spacing:0.033px;">Podstawowa</span>
<svg class="a" style="left:183px;top:380px;" width="9" height="9" viewBox="0 0 9 9"><rect x="0.5" y="0.5" width="8" height="8" rx="1.6" fill="#f6f6f6" stroke="#8c8c8c" stroke-width="1"/><path d="M2.4 4.5 H6.6" stroke="#555" stroke-width="1"/></svg>
<span id="t57" class="a t" style="top:379px;font-size:11px;line-height:11px;color:#111;left:197.3px;letter-spacing:0.052px;">Zerowa</span>
<svg class="a" style="left:319px;top:317px;" width="9" height="9" viewBox="0 0 9 9"><rect x="0.5" y="0.5" width="8" height="8" rx="1.6" fill="#f6f6f6" stroke="#8c8c8c" stroke-width="1"/><path d="M2.4 4.5 H6.6" stroke="#555" stroke-width="1"/></svg>
<span id="t58" class="a t" style="top:316px;font-size:11px;line-height:11px;color:#111;left:332.8px;letter-spacing:-1.044px;">SE</span>
<svg class="a" style="left:319px;top:380px;" width="9" height="9" viewBox="0 0 9 9"><rect x="0.5" y="0.5" width="8" height="8" rx="1.6" fill="#f6f6f6" stroke="#8c8c8c" stroke-width="1"/><path d="M2.4 4.5 H6.6" stroke="#555" stroke-width="1"/></svg>
<span id="t59" class="a t" style="top:379px;font-size:11px;line-height:11px;color:#111;left:332.8px;letter-spacing:-1.044px;">SE</span>
<span id="t60" class="a t" style="top:316px;font-size:11px;line-height:11px;color:#111;left:448px;letter-spacing:-0.810px;">23%</span>
<span id="t61" class="a t" style="top:379px;font-size:11px;line-height:11px;color:#111;left:448px;letter-spacing:-1.200px;">0%</span>
<div class="a" style="left:78px;top:416px;width:468px;height:14px;background:#e4e4e4;border-top:1px solid #dcdcdc;"></div>
<div class="a" style="left:544px;top:289px;width:101px;height:22px;background:#f0f0f0;border:1px solid #dcdcdc;"></div>
<span id="t62" class="a t" style="top:295px;font-size:11px;line-height:11px;color:#111;left:549.2px;letter-spacing:0.167px;">Netto</span>
<div class="a" style="left:646px;top:290px;width:109px;height:21px;background:#fff;border-right:1px solid #e6e6e6;border-bottom:1px solid #ececec;"></div>
<span id="t63" class="a t" style="top:295px;font-size:11px;line-height:11px;color:#111;right:625.2px;letter-spacing:-0.091px;">18 023,26</span>
<div class="a" style="left:544px;top:310px;width:101px;height:22px;background:#f0f0f0;border:1px solid #dcdcdc;"></div>
<span id="t64" class="a t" style="top:316px;font-size:11px;line-height:11px;color:#111;left:549.2px;letter-spacing:0.291px;">Vat</span>
<div class="a" style="left:646px;top:311px;width:109px;height:21px;background:#fff;border-right:1px solid #e6e6e6;border-bottom:1px solid #ececec;"></div>
<span id="t65" class="a t" style="top:316px;font-size:11px;line-height:11px;color:#111;right:625.2px;letter-spacing:-0.111px;">4 145,35</span>
<div class="a" style="left:544px;top:331px;width:101px;height:22px;background:#f0f0f0;border:1px solid #dcdcdc;"></div>
<span id="t66" class="a t" style="top:337px;font-size:11px;line-height:11px;color:#111;left:549.2px;letter-spacing:0.122px;">Brutto</span>
<div class="a" style="left:646px;top:332px;width:109px;height:21px;background:#fff;border-right:1px solid #e6e6e6;border-bottom:1px solid #ececec;"></div>
<span id="t67" class="a t" style="top:337px;font-size:11px;line-height:11px;color:#111;right:625.2px;letter-spacing:-0.091px;">22 168,61</span>
<div class="a" style="left:544px;top:352px;width:101px;height:22px;background:#f0f0f0;border:1px solid #dcdcdc;"></div>
<span id="t68" class="a t" style="top:358px;font-size:11px;line-height:11px;color:#111;left:549.2px;letter-spacing:0.167px;">Netto</span>
<div class="a" style="left:646px;top:353px;width:109px;height:21px;background:#fff;border-right:1px solid #e6e6e6;border-bottom:1px solid #ececec;"></div>
<span id="t69" class="a t" style="top:358px;font-size:11px;line-height:11px;color:#111;right:625.2px;letter-spacing:-0.102px;">107,01</span>
<div class="a" style="left:544px;top:373px;width:101px;height:22px;background:#f0f0f0;border:1px solid #dcdcdc;"></div>
<span id="t70" class="a t" style="top:379px;font-size:11px;line-height:11px;color:#111;left:549.2px;letter-spacing:0.291px;">Vat</span>
<div class="a" style="left:646px;top:374px;width:109px;height:21px;background:#fff;border-right:1px solid #e6e6e6;border-bottom:1px solid #ececec;"></div>
<span id="t71" class="a t" style="top:379px;font-size:11px;line-height:11px;color:#111;right:625.2px;letter-spacing:-0.183px;">0,00</span>
<div class="a" style="left:544px;top:394px;width:101px;height:22px;background:#f0f0f0;border:1px solid #dcdcdc;"></div>
<span id="t72" class="a t" style="top:400px;font-size:11px;line-height:11px;color:#111;left:549.2px;letter-spacing:0.122px;">Brutto</span>
<div class="a" style="left:646px;top:395px;width:109px;height:21px;background:#fff;border-right:1px solid #e6e6e6;border-bottom:1px solid #ececec;"></div>
<span id="t73" class="a t" style="top:400px;font-size:11px;line-height:11px;color:#111;right:625.2px;letter-spacing:-0.102px;">107,01</span>
<div class="a" style="left:755px;top:290px;width:591px;height:139px;background:#fff;"></div>
<div class="a" style="left:544px;top:415px;width:101px;height:15px;background:#e4e4e4;border:1px solid #dcdcdc;border-bottom:none;overflow:hidden;"><span class="t" style="position:absolute;left:4px;top:8.5px;font-size:11px;line-height:11px;color:#111;letter-spacing:-0.2px">Netto</span></div>
<div class="a" style="left:646px;top:416px;width:108px;height:14px;background:#f7f7f9;border:1px solid #0f6cb6;border-bottom:none;border-width:1.5px;overflow:hidden;"><span class="t" style="position:absolute;right:3.5px;top:7.5px;font-size:11px;line-height:11px;color:#111;letter-spacing:-0.2px">18 130,27</span></div>
<div class="a" style="left:645px;top:288px;width:711px;height:2px;background:#b4b4b4;"></div>
<div class="a" style="left:644px;top:289px;width:2px;height:141px;background:#b4b4b4;"></div>
<div class="a" style="left:1346px;top:290px;width:10px;height:139px;background:#fff;"></div>
<svg class="a" style="left:1346.5px;top:293px;" width="8" height="6" viewBox="0 0 8 6"><path d="M1 5 L4 1.2 L7 5" fill="none" stroke="#9a9a9a" stroke-width="1"/></svg>
<div class="a" style="left:1346px;top:302px;width:7px;height:77px;background:#b9b9b9;"></div>
<svg class="a" style="left:1346.5px;top:420.5px;" width="8" height="6" viewBox="0 0 8 6"><path d="M1 1 L4.0 5 L7 1" fill="none" stroke="#9a9a9a" stroke-width="1" stroke-linecap="butt" stroke-linejoin="miter"/></svg>
<div class="a" style="left:78px;top:150px;width:1278px;height:1px;background:repeating-linear-gradient(90deg,#666 0,#666 2px,transparent 2px,transparent 3px);"></div>
<div class="a" style="left:78px;top:429px;width:1278px;height:1px;background:repeating-linear-gradient(90deg,#666 0,#666 2px,transparent 2px,transparent 3px);"></div>
<div class="a" style="left:78px;top:150px;width:1px;height:280px;background:repeating-linear-gradient(180deg,#666 0,#666 2px,transparent 2px,transparent 3px);"></div>
<div class="a" style="left:1355px;top:150px;width:1px;height:280px;background:repeating-linear-gradient(180deg,#666 0,#666 2px,transparent 2px,transparent 3px);"></div>
<div class="a" style="left:78px;top:430px;width:1278px;height:3px;background:#c9c9c9;"></div>
<div class="a" style="left:710px;top:431px;width:14px;height:1px;background:#f4f4f4;"></div>
<svg class="a" style="left:83px;top:440.4px;" width="16" height="16" viewBox="0 0 16 16"><rect x="4.6" y="0.5" width="7" height="4" rx="0.9" fill="#fff" stroke="#7d7d7d" stroke-width="1"/><rect x="2.6" y="2.9" width="10.8" height="4.6" fill="#fff"/><rect x="3.1" y="3" width="9.8" height="3.7" fill="#3d78b8"/><path d="M0.1 4.2 H1.8 V8 H14.2 V4.2 H15.9 V11.8 H0.1 Z" fill="#767676"/><rect x="1" y="9.7" width="2" height="1.3" rx="0.3" fill="#fff"/><rect x="4.6" y="10.6" width="7" height="5" rx="0.9" fill="#fff" stroke="#7d7d7d" stroke-width="1.1"/><rect x="6.1" y="12.9" width="3.8" height="0.9" fill="#6f9bd1"/></svg>
<svg class="a" style="left:106.5px;top:445.5px;" width="8" height="5.6" viewBox="0 0 8 5.6"><path d="M1 1 L4.0 4.6 L7 1" fill="none" stroke="#0a306e" stroke-width="1.5" stroke-linecap="butt" stroke-linejoin="miter"/></svg>
<svg class="a" style="left:1130px;top:440px;" width="17" height="16" viewBox="0 0 17 16"><path d="M0.5 0 V15.5 H16.4" fill="none" stroke="#8a8a8a" stroke-width="1"/><rect x="2" y="6.7" width="4" height="8.4" fill="#66bb6a"/><rect x="7" y="1" width="4" height="14.1" fill="#fbc02d"/><rect x="12" y="3.8" width="4" height="11.3" fill="#7e57c2"/></svg>
<svg class="a" style="left:1151px;top:445.5px;" width="8" height="5.6" viewBox="0 0 8 5.6"><path d="M1 1 L4.0 4.6 L7 1" fill="none" stroke="#0a306e" stroke-width="1.5" stroke-linecap="butt" stroke-linejoin="miter"/></svg>
<svg class="a" style="left:1169px;top:440px;" width="17" height="17" viewBox="0 0 17 17"><path d="M6.4 13.3 H0.6 V0.6 H14.4 V6" fill="none" stroke="#7a7a7a" stroke-width="1.1"/><rect x="0.2" y="0.2" width="14.6" height="2.5" fill="#3c74c0"/><rect x="8" y="0.9" width="2" height="0.7" fill="#fff"/><rect x="11" y="0.9" width="2" height="0.7" fill="#fff"/><circle cx="11.6" cy="10.6" r="3.3" fill="#fff" stroke="#2f6fbf" stroke-width="1.8"/><path d="M9.2 13 L7.6 14.8" stroke="#2f6fbf" stroke-width="2.2" stroke-linecap="round"/></svg>
<span id="t74" class="a t" style="top:443px;font-size:11px;line-height:11px;color:#222;left:1188.7px;letter-spacing:-0.168px;">Podgląd</span>
<svg class="a" style="left:1239px;top:440px;" width="17" height="17" viewBox="0 0 17 17"><path d="M0.2 1 H14.4 L8.6 7.4 L5.6 12.6 L5.4 7.2 Z" fill="#6f6f6f"/><path d="M9.6 5 L13.6 1.2" stroke="#fff" stroke-width="1.2"/><circle cx="10.6" cy="11" r="5.5" fill="#fff"/><circle cx="10.6" cy="11" r="4.9" fill="#2eab6a"/><path d="M8 11.1 L9.9 13 L13.3 9.2" fill="none" stroke="#fff" stroke-width="1.7"/></svg>
<span id="t75" class="a t" style="top:443px;font-size:11px;line-height:11px;color:#222;left:1257.9px;letter-spacing:-0.042px;">Filtruj</span>
<svg class="a" style="left:1295.8px;top:440.5px;" width="17" height="17" viewBox="0 0 17 17"><rect x="0.6" y="0.6" width="13.4" height="12.4" fill="#fff" stroke="#8a8a8a" stroke-width="1.1"/><rect x="0.6" y="0.6" width="13.4" height="2.6" fill="#3c74c0"/><rect x="2.2" y="4.6" width="3.4" height="7.4" fill="#c8dcf0"/><path d="M7 5.4 H12.6 M7 7.4 H10" stroke="#aaa" stroke-width="1"/><g fill="#555"><circle cx="12.2" cy="12.2" r="3.1"/><rect x="11.3" y="7.8" width="1.8" height="8.8" transform="rotate(0 12.2 12.2)"/><rect x="11.3" y="7.8" width="1.8" height="8.8" transform="rotate(45 12.2 12.2)"/><rect x="11.3" y="7.8" width="1.8" height="8.8" transform="rotate(90 12.2 12.2)"/><rect x="11.3" y="7.8" width="1.8" height="8.8" transform="rotate(135 12.2 12.2)"/></g><circle cx="12.2" cy="12.2" r="1.3" fill="#fff"/></svg>
<svg class="a" style="left:1316.5px;top:445.5px;" width="8" height="5.6" viewBox="0 0 8 5.6"><path d="M1 1 L4.0 4.6 L7 1" fill="none" stroke="#0a306e" stroke-width="1.5" stroke-linecap="butt" stroke-linejoin="miter"/></svg>
<svg class="a" style="left:1335px;top:440px;" width="16" height="16" viewBox="0 0 16 16"><circle cx="8" cy="8" r="8" fill="#2968b0"/><text x="8" y="12.6" font-family="Liberation Sans, sans-serif" font-size="13" font-weight="700" fill="#fff" text-anchor="middle">?</text></svg>
<div class="a" style="left:1324px;top:456px;width:23px;height:9px;background:#f5f5f5;border:1px solid #cfcfcf;border-radius:2px 2px 0 0;border-bottom:none;"></div>
<svg class="a" style="left:1331px;top:459px;" width="9" height="5.6" viewBox="0 0 9 5.6"><path d="M1 1 L4.5 4.6 L8 1" fill="none" stroke="#0a306e" stroke-width="1.1" stroke-linecap="butt" stroke-linejoin="miter"/></svg>
<div class="a" style="left:78px;top:464px;width:1278px;height:33px;background:#f3f3f3;border-top:1px solid #c4c4c4;"></div>
<div class="a" style="left:104px;top:465px;width:1px;height:31px;background:#dedede;"></div>
<div class="a" style="left:184px;top:465px;width:1px;height:31px;background:#dedede;"></div>
<div class="a" style="left:483px;top:465px;width:1px;height:31px;background:#dedede;"></div>
<div class="a" style="left:614px;top:465px;width:1px;height:31px;background:#dedede;"></div>
<div class="a" style="left:1023px;top:465px;width:1px;height:31px;background:#dedede;"></div>
<div class="a" style="left:1069px;top:465px;width:1px;height:31px;background:#dedede;"></div>
<div class="a" style="left:1115px;top:465px;width:1px;height:31px;background:#dedede;"></div>
<div class="a" style="left:1340px;top:465px;width:1px;height:31px;background:#dedede;"></div>
<div class="a" style="left:227px;top:481px;width:1px;height:15px;background:#dedede;"></div>
<div class="a" style="left:257px;top:481px;width:1px;height:15px;background:#dedede;"></div>
<div class="a" style="left:303px;top:481px;width:1px;height:15px;background:#dedede;"></div>
<div class="a" style="left:412px;top:481px;width:1px;height:15px;background:#dedede;"></div>
<div class="a" style="left:685px;top:481px;width:1px;height:15px;background:#dedede;"></div>
<div class="a" style="left:788px;top:481px;width:1px;height:15px;background:#dedede;"></div>
<div class="a" style="left:859px;top:481px;width:1px;height:15px;background:#dedede;"></div>
<div class="a" style="left:930px;top:481px;width:1px;height:15px;background:#dedede;"></div>
<div class="a" style="left:1184px;top:481px;width:1px;height:15px;background:#dedede;"></div>
<div class="a" style="left:1261px;top:481px;width:1px;height:15px;background:#dedede;"></div>
<div class="a" style="left:615px;top:481px;width:70px;height:14px;background:#e9e9e9;"></div>
<div class="a" style="left:184px;top:480px;width:299px;height:1px;background:#dedede;"></div>
<div class="a" style="left:614px;top:480px;width:409px;height:1px;background:#dedede;"></div>
<div class="a" style="left:1115px;top:480px;width:225px;height:1px;background:#dedede;"></div>
<div class="a" style="left:78px;top:495px;width:1278px;height:2px;background:#bdbdbd;"></div>
<span id="t76" class="a t" style="top:467px;font-size:11px;line-height:11px;color:#333;font-weight:700;left:109.2px;letter-spacing:-0.541px;">Symbol</span>
<span id="t77" class="a t" style="top:467px;font-size:11px;line-height:11px;color:#333;font-weight:700;left:189.3px;letter-spacing:-0.488px;">Dowód</span>
<span id="t78" class="a t" style="top:467px;font-size:11px;line-height:11px;color:#333;font-weight:700;left:488.3px;letter-spacing:-0.349px;">Numer</span>
<span id="t79" class="a t" style="top:467px;font-size:11px;line-height:11px;color:#333;font-weight:700;left:619.5px;letter-spacing:-0.268px;">Data</span>
<span id="t80" class="a t" style="top:467px;font-size:11px;line-height:11px;color:#333;font-weight:700;left:1026.7px;letter-spacing:-0.595px;">Grupa</span>
<span id="t81" class="a t" style="top:467px;font-size:11px;line-height:11px;color:#333;font-weight:700;left:1072.6px;letter-spacing:0.121px;">VAT</span>
<span id="t82" class="a t" style="top:467px;font-size:11px;line-height:11px;color:#333;font-weight:700;left:1119px;letter-spacing:-0.553px;">Kwoty</span>
<span id="t83" class="a t" style="top:483px;font-size:11px;line-height:11px;color:#333;font-weight:700;left:109.2px;letter-spacing:-0.366px;">poz deklaracji</span>
<span id="t84" class="a t" style="top:483px;font-size:11px;line-height:11px;color:#333;font-weight:700;left:189.3px;letter-spacing:-0.952px;">RD</span>
<span id="t85" class="a t" style="top:483px;font-size:11px;line-height:11px;color:#333;font-weight:700;left:232px;letter-spacing:-0.081px;">Mag</span>
<span id="t86" class="a t" style="top:483px;font-size:11px;line-height:11px;color:#333;font-weight:700;left:262px;letter-spacing:-0.418px;">ND</span>
<span id="t87" class="a t" style="top:483px;font-size:11px;line-height:11px;color:#333;font-weight:700;left:308.6px;letter-spacing:-0.349px;">Numer</span>
<span id="t88" class="a t" style="top:483px;font-size:11px;line-height:11px;color:#333;font-weight:700;left:417px;letter-spacing:-0.563px;">Logo</span>
<span id="t89" class="a t" style="top:483px;font-size:11px;line-height:11px;color:#333;font-weight:700;left:488.3px;letter-spacing:-0.389px;">faktury</span>
<span id="t90" class="a t" style="top:483px;font-size:11px;line-height:11px;color:#333;font-weight:700;left:619.5px;letter-spacing:-0.516px;">Dowodu</span>
<span id="t91" class="a t" style="top:483px;font-size:11px;line-height:11px;color:#333;font-weight:700;left:690.2px;letter-spacing:-0.364px;">wystawienia</span>
<span id="t92" class="a t" style="top:483px;font-size:11px;line-height:11px;color:#333;font-weight:700;left:793px;letter-spacing:-0.391px;">sprzedaży</span>
<span id="t93" class="a t" style="top:483px;font-size:11px;line-height:11px;color:#333;font-weight:700;left:864.3px;letter-spacing:0.121px;">VAT</span>
<span id="t94" class="a t" style="top:483px;font-size:11px;line-height:11px;color:#333;font-weight:700;left:935.4px;letter-spacing:-0.344px;">płatności</span>
<span id="t95" class="a t" style="top:483px;font-size:11px;line-height:11px;color:#333;font-weight:700;left:1026.7px;letter-spacing:-0.335px;">klas.</span>
<span id="t96" class="a t" style="top:483px;font-size:11px;line-height:11px;color:#333;font-weight:700;left:1072.6px;letter-spacing:-0.272px;">stawka</span>
<span id="t97" class="a t" style="top:483px;font-size:11px;line-height:11px;color:#333;font-weight:700;left:1189.3px;letter-spacing:0.020px;">Vat</span>
<span id="t98" class="a t" style="top:483px;font-size:11px;line-height:11px;color:#333;font-weight:700;left:1266px;letter-spacing:-0.484px;">Brutto</span>
<span id="t99" class="a t" style="top:483px;font-size:11px;line-height:11px;color:#1079c0;font-weight:700;left:1119px;letter-spacing:-0.196px;">Netto</span>
<div class="a" style="left:85px;top:482px;width:12px;height:12px;background:#fff;border:1px solid #c2c2c2;border-radius:1px;"></div>
<div class="a" style="left:78px;top:517px;width:1278px;height:20px;background:#e9f1f6;border-top:2px solid #0f78be;border-bottom:2px solid #0f78be;"></div>
<div class="a" style="left:1115px;top:497px;width:226px;height:20px;background:#86dfec;"></div>
<div class="a" style="left:1115px;top:519px;width:226px;height:16px;background:#86dfec;"></div>
<div class="a" style="left:1115px;top:517px;width:70px;height:20px;background:#94e2ed;border:3px solid #0b78ba;"></div>
<div class="a" style="left:85px;top:501px;width:12px;height:12px;background:#fff;border:1px solid #c2c2c2;border-radius:1px;"></div>
<span id="t100" class="a t" style="top:502px;font-size:11px;line-height:11px;color:#111;left:109.2px;letter-spacing:-0.699px;">SPRZ_EXP</span>
<span id="t101" class="a t" style="top:502px;font-size:11px;line-height:11px;color:#111;left:189.3px;letter-spacing:-0.745px;">FSEX</span>
<span id="t102" class="a t" style="top:502px;font-size:11px;line-height:11px;color:#111;left:232px;letter-spacing:0.057px;">010</span>
<span id="t103" class="a t" style="top:502px;font-size:11px;line-height:11px;color:#111;right:1074.6px;letter-spacing:0.052px;">54</span>
<span id="t104" class="a t" style="top:502px;font-size:11px;line-height:11px;color:#111;left:308.6px;letter-spacing:0.133px;">FSEX/010/16/54</span>
<span id="t105" class="a t" style="top:502px;font-size:11px;line-height:11px;color:#111;left:417px;letter-spacing:-0.272px;">44-O-159-Z</span>
<span id="t106" class="a t" style="top:502px;font-size:11px;line-height:11px;color:#111;left:488.3px;letter-spacing:-0.029px;">FSEX/USD/00054/16</span>
<span id="t107" class="a t" style="top:502px;font-size:11px;line-height:11px;color:#111;left:619.5px;letter-spacing:-0.080px;">2016-08-02</span>
<span id="t108" class="a t" style="top:502px;font-size:11px;line-height:11px;color:#111;left:690.2px;letter-spacing:-0.080px;">2016-08-02</span>
<span id="t109" class="a t" style="top:502px;font-size:11px;line-height:11px;color:#111;left:793px;letter-spacing:-0.080px;">2016-08-02</span>
<span id="t110" class="a t" style="top:502px;font-size:11px;line-height:11px;color:#111;left:864.3px;letter-spacing:-0.080px;">2016-08-02</span>
<span id="t111" class="a t" style="top:502px;font-size:11px;line-height:11px;color:#111;left:935.4px;letter-spacing:-0.080px;">2016-08-16</span>
<span id="t112" class="a t" style="top:502px;font-size:11px;line-height:11px;color:#111;left:1026.7px;letter-spacing:-0.955px;">SE</span>
<span id="t113" class="a t" style="top:502px;font-size:11px;line-height:11px;color:#111;left:1072.6px;letter-spacing:-0.836px;">0%</span>
<span id="t114" class="a t" style="top:502px;font-size:11px;line-height:11px;color:#111;right:194px;letter-spacing:-0.102px;">107,01</span>
<span id="t115" class="a t" style="top:502px;font-size:11px;line-height:11px;color:#111;right:116.70000000000005px;letter-spacing:-0.183px;">0,00</span>
<span id="t116" class="a t" style="top:502px;font-size:11px;line-height:11px;color:#111;right:38.40000000000009px;letter-spacing:-0.102px;">107,01</span>
<div class="a" style="left:85px;top:521px;width:12px;height:12px;background:#fff;border:1px solid #c2c2c2;border-radius:1px;"></div>
<span id="t117" class="a t" style="top:522px;font-size:11px;line-height:11px;color:#111;left:109.2px;letter-spacing:-0.699px;">SPRZ_EXP</span>
<span id="t118" class="a t" style="top:522px;font-size:11px;line-height:11px;color:#111;left:189.3px;letter-spacing:-0.745px;">FSEX</span>
<span id="t119" class="a t" style="top:522px;font-size:11px;line-height:11px;color:#111;left:232px;letter-spacing:0.057px;">010</span>
<span id="t120" class="a t" style="top:522px;font-size:11px;line-height:11px;color:#111;right:1074.6px;letter-spacing:0.052px;">55</span>
<span id="t121" class="a t" style="top:522px;font-size:11px;line-height:11px;color:#111;left:308.6px;letter-spacing:0.133px;">FSEX/010/16/55</span>
<span id="t122" class="a t" style="top:522px;font-size:11px;line-height:11px;color:#111;left:417px;letter-spacing:-0.272px;">52-O-193-Z</span>
<span id="t123" class="a t" style="top:522px;font-size:11px;line-height:11px;color:#111;left:488.3px;letter-spacing:-0.029px;">FSEX/USD/00055/16</span>
<span id="t124" class="a t" style="top:522px;font-size:11px;line-height:11px;color:#111;left:619.5px;letter-spacing:-0.080px;">2016-08-05</span>
<span id="t125" class="a t" style="top:522px;font-size:11px;line-height:11px;color:#111;left:690.2px;letter-spacing:-0.080px;">2016-08-05</span>
<span id="t126" class="a t" style="top:522px;font-size:11px;line-height:11px;color:#111;left:793px;letter-spacing:-0.080px;">2016-08-05</span>
<span id="t127" class="a t" style="top:522px;font-size:11px;line-height:11px;color:#111;left:864.3px;letter-spacing:-0.080px;">2016-08-05</span>
<span id="t128" class="a t" style="top:522px;font-size:11px;line-height:11px;color:#111;left:935.4px;letter-spacing:-0.080px;">2016-08-26</span>
<span id="t129" class="a t" style="top:522px;font-size:11px;line-height:11px;color:#111;left:1026.7px;letter-spacing:-0.955px;">SE</span>
<span id="t130" class="a t" style="top:522px;font-size:11px;line-height:11px;color:#111;left:1072.6px;letter-spacing:-0.540px;">23%</span>
<span id="t131" class="a t" style="top:522px;font-size:11px;line-height:11px;color:#111;right:194px;letter-spacing:-0.091px;">18 023,26</span>
<span id="t132" class="a t" style="top:522px;font-size:11px;line-height:11px;color:#111;right:116.70000000000005px;letter-spacing:-0.111px;">4 145,35</span>
<span id="t133" class="a t" style="top:522px;font-size:11px;line-height:11px;color:#111;right:38.40000000000009px;letter-spacing:-0.091px;">22 168,61</span>
<div class="a" style="left:104px;top:497px;width:1px;height:20px;background:#dde9f4;"></div>
<div class="a" style="left:104px;top:519px;width:1px;height:16px;background:#d5e4f1;"></div>
<div class="a" style="left:78px;top:651px;width:1278px;height:30px;background:#ebebeb;border-radius:0 0 2px 3px;border-top:1px solid #d2d2d2;"></div>
<svg class="a" style="left:83px;top:658px;" width="17" height="17" viewBox="0 0 17 17"><rect x="0.5" y="1" width="14" height="12.8" fill="#fff"/><path d="M7.6 1.4 H14.3 V6.8 M7.4 4.4 H13.6 M0.6 3.6 V13.4 H4" fill="none" stroke="#555" stroke-width="1"/><rect x="0.1" y="0.2" width="7.8" height="3.6" fill="#3a78b8"/><path d="M6.9 8.2 H9.3 V10 H11.5 V8.2 H13.9 L15.9 12.4 V15.8 H11 V12.8 H9.8 V15.8 H5.1 V12.4 Z" fill="#454545"/><g fill="#fff"><circle cx="8.1" cy="9.5" r="0.55"/><circle cx="12.7" cy="9.5" r="0.55"/><circle cx="8.1" cy="11.5" r="0.55"/><circle cx="12.7" cy="11.5" r="0.55"/><rect x="6.9" y="13.2" width="1" height="1.8" rx="0.4"/><rect x="13.2" y="13.2" width="1" height="1.8" rx="0.4"/></g></svg>
<svg class="a" style="left:103.8px;top:665px;" width="6.4" height="3.2" viewBox="0 0 6.4 3.2"><path d="M0 0 H6.4 L3.2 3.2 Z" fill="#111"/></svg>
<div class="a" style="left:121px;top:651px;width:160px;height:22px;background:#fff;border:1px solid #cacaca;border-radius:0 0 2px 2px;"></div>
<span id="t134" class="a t" style="top:658px;font-size:11px;line-height:11px;color:#333;left:130px;letter-spacing:0.059px;">Administracja uprawnieniami</span>
<div class="a" style="left:283px;top:651px;width:205px;height:23px;background:#fff;border:1px solid #0f78be;border-radius:0 0 3px 3px;border-top:1px solid #d2d2d2;border-bottom:2px solid #0f78be;"></div>
<span id="t135" class="a t" style="top:658px;font-size:11px;line-height:11px;color:#0f78be;left:291.7px;letter-spacing:-0.051px;">Dokumenty sprzedaży dla rejestru VAT</span>
</div>
</body></html>
